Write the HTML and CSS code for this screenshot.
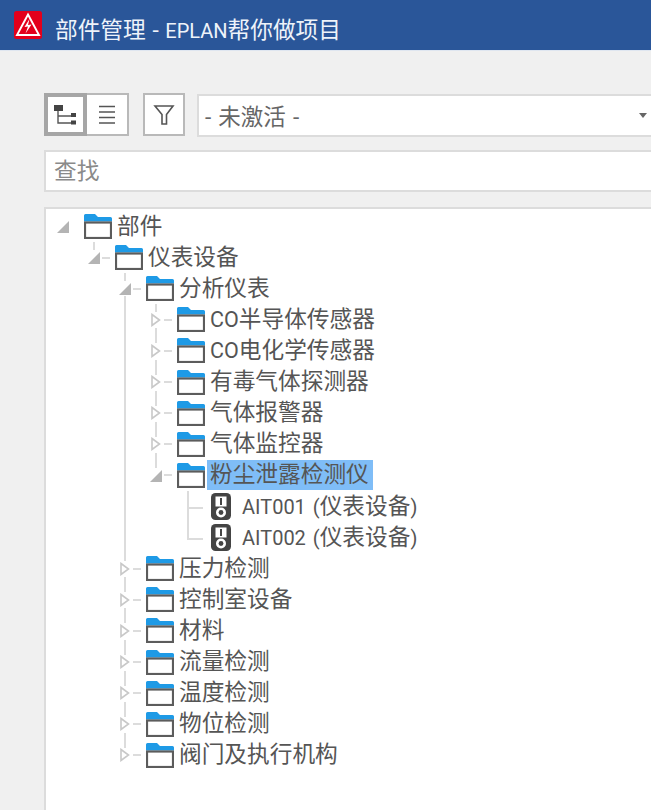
FILE: index.html
```html
<!DOCTYPE html>
<html lang="zh-CN">
<head>
<meta charset="utf-8">
<title>部件管理 - EPLAN帮你做项目</title>
<link rel="stylesheet" href="styles.css">
</head>
<body>
<svg class="defs" width="0" height="0" aria-hidden="true">
  <symbol id="folder" viewBox="0 0 28 25">
    <path d="M0 7.5V1.5Q0 0 1.5 0H11L14 3H26.5Q28 3 28 4.5V7.5Z" fill="#1e9ae6"/>
    <rect x="1" y="8.5" width="26" height="15.5" fill="#fff" stroke="#5c5c5c" stroke-width="2.2"/>
  </symbol>
  <symbol id="tw-open" viewBox="0 0 12 12">
    <path d="M12 0V12H0Z" fill="#b4b4b4"/>
  </symbol>
  <symbol id="tw-closed" viewBox="0 0 10 14">
    <path d="M1 1.5L8.5 7L1 12.5Z" fill="#fff" stroke="#c8c8c8" stroke-width="1.6"/>
  </symbol>
  <symbol id="device" viewBox="0 0 20 27">
    <rect width="20" height="27" rx="4.5" fill="#444"/>
    <rect x="4.5" y="3.5" width="11" height="10" fill="#fff"/>
    <rect x="9" y="5" width="2" height="7" fill="#444"/>
    <circle cx="10" cy="19.5" r="5" fill="#fff"/>
    <circle cx="10" cy="19.5" r="2.4" fill="#444"/>
  </symbol>
</svg>

<header class="titlebar">
  <svg class="logo" viewBox="0 0 28 28" aria-hidden="true">
    <rect width="28" height="28" rx="2.5" fill="#e3001b"/>
    <path d="M14 3.5L25 24H3Z" fill="none" stroke="#fff" stroke-width="1.9" stroke-linejoin="miter"/>
    <path d="M15.5 8L10.5 16L14 15.5L11.5 22.5L17.5 13.5L14 14Z" fill="#fff"/>
  </svg>
  <h1 class="title">部件管理 - <span class="lat">EPLAN</span>帮你做项目</h1>
</header>

<main class="main">
  <div class="toolbar">
    <div class="toggle">
      <button class="tool tool-active" type="button" aria-label="树视图">
        <svg class="tool-icon" viewBox="0 0 24 20" aria-hidden="true">
          <rect x="0" y="0" width="9" height="6" fill="#444"/>
          <path d="M4 6V18H17M4 11H17" fill="none" stroke="#555" stroke-width="1.4"/>
          <rect x="17" y="8" width="5" height="4" fill="#444"/>
          <rect x="17" y="15.5" width="5" height="4" fill="#444"/>
        </svg>
      </button>
      <button class="tool tool-second" type="button" aria-label="列表视图">
        <svg class="tool-icon" viewBox="0 0 24 20" aria-hidden="true">
          <path d="M4 1.5H20M4 7H20M4 12.5H20M4 18H20" stroke="#555" stroke-width="1.7" fill="none"/>
        </svg>
      </button>
    </div>
    <button class="tool tool-filter" type="button" aria-label="筛选">
      <svg class="tool-icon" viewBox="0 0 24 20" aria-hidden="true">
        <path d="M3 1H21L14.5 9.5V19H10V9.5Z" fill="none" stroke="#555" stroke-width="1.6"/>
      </svg>
    </button>
    <div class="combo">
      <span class="combo-text">- 未激活 -</span>
      <span class="combo-arrow"></span>
    </div>
  </div>

  <div class="search">查找</div>

  <div class="tree-panel">
    <ul class="tree">
      <li>
        <div class="row">
          <span class="twist"><svg class="tw tw-o"><use href="#tw-open"/></svg></span>
          <svg class="folder"><use href="#folder"/></svg><span class="label">部件</span>
        </div>
        <ul class="kids">
          <li>
            <div class="row up">
              <span class="twist dash"><svg class="tw tw-o"><use href="#tw-open"/></svg></span>
              <svg class="folder"><use href="#folder"/></svg><span class="label">仪表设备</span>
            </div>
            <ul class="kids">
              <li>
                <div class="row up">
                  <span class="twist dash"><svg class="tw tw-o"><use href="#tw-open"/></svg></span>
                  <svg class="folder"><use href="#folder"/></svg><span class="label">分析仪表</span>
                </div>
                <ul class="kids kids-line">
                  <li><div class="row up down"><span class="twist dash"><svg class="tw tw-c"><use href="#tw-closed"/></svg></span><svg class="folder"><use href="#folder"/></svg><span class="label"><span class="lat-co">CO</span>半导体传感器</span></div></li>
                  <li><div class="row up down"><span class="twist dash"><svg class="tw tw-c"><use href="#tw-closed"/></svg></span><svg class="folder"><use href="#folder"/></svg><span class="label"><span class="lat-co">CO</span>电化学传感器</span></div></li>
                  <li><div class="row up down"><span class="twist dash"><svg class="tw tw-c"><use href="#tw-closed"/></svg></span><svg class="folder"><use href="#folder"/></svg><span class="label">有毒气体探测器</span></div></li>
                  <li><div class="row up down"><span class="twist dash"><svg class="tw tw-c"><use href="#tw-closed"/></svg></span><svg class="folder"><use href="#folder"/></svg><span class="label">气体报警器</span></div></li>
                  <li><div class="row up down"><span class="twist dash"><svg class="tw tw-c"><use href="#tw-closed"/></svg></span><svg class="folder"><use href="#folder"/></svg><span class="label">气体监控器</span></div></li>
                  <li>
                    <div class="row up">
                      <span class="twist dash"><svg class="tw tw-o"><use href="#tw-open"/></svg></span>
                      <svg class="folder"><use href="#folder"/></svg><span class="label label-selected">粉尘泄露检测仪</span>
                    </div>
                    <ul class="kids">
                      <li><div class="row"><span class="twist elbow"></span><svg class="device"><use href="#device"/></svg><span class="label label-leaf"><span class="lat">AIT001 (</span>仪表设备<span class="lat">)</span></span></div></li>
                      <li><div class="row"><span class="twist elbow elbow-last"></span><svg class="device"><use href="#device"/></svg><span class="label label-leaf"><span class="lat">AIT002 (</span>仪表设备<span class="lat">)</span></span></div></li>
                    </ul>
                  </li>
                </ul>
              </li>
              <li><div class="row up down"><span class="twist dash"><svg class="tw tw-c"><use href="#tw-closed"/></svg></span><svg class="folder"><use href="#folder"/></svg><span class="label">压力检测</span></div></li>
              <li><div class="row up down"><span class="twist dash"><svg class="tw tw-c"><use href="#tw-closed"/></svg></span><svg class="folder"><use href="#folder"/></svg><span class="label">控制室设备</span></div></li>
              <li><div class="row up down"><span class="twist dash"><svg class="tw tw-c"><use href="#tw-closed"/></svg></span><svg class="folder"><use href="#folder"/></svg><span class="label">材料</span></div></li>
              <li><div class="row up down"><span class="twist dash"><svg class="tw tw-c"><use href="#tw-closed"/></svg></span><svg class="folder"><use href="#folder"/></svg><span class="label">流量检测</span></div></li>
              <li><div class="row up down"><span class="twist dash"><svg class="tw tw-c"><use href="#tw-closed"/></svg></span><svg class="folder"><use href="#folder"/></svg><span class="label">温度检测</span></div></li>
              <li><div class="row up down"><span class="twist dash"><svg class="tw tw-c"><use href="#tw-closed"/></svg></span><svg class="folder"><use href="#folder"/></svg><span class="label">物位检测</span></div></li>
              <li><div class="row up"><span class="twist dash"><svg class="tw tw-c"><use href="#tw-closed"/></svg></span><svg class="folder"><use href="#folder"/></svg><span class="label">阀门及执行机构</span></div></li>
            </ul>
          </li>
        </ul>
      </li>
    </ul>
  </div>
</main>
</body>
</html>
```

FILE: styles.css
```css
* { box-sizing: border-box; }

html, body {
  margin: 0;
  height: 100%;
  overflow: hidden;
}

body {
  display: flex;
  flex-direction: column;
  background: #f0f0f0;
  font-family: Roboto, "Noto Sans CJK SC", sans-serif;
  color: #555;
}

.defs { position: absolute; }

.lat { font-size: 20px; word-spacing: 2px; }
.lat-co { font-size: 21.5px; }

.titlebar {
  flex: none;
  height: 51px;
  display: flex;
  align-items: center;
  padding-left: 14px;
  gap: 14px;
  background: #2a5699;
  border-bottom: 1px solid #dfe6f0;
}

.logo { width: 28px; height: 28px; flex: none; }

.title {
  margin: 0 0 0 -1px;
  padding-top: 6px;
  font-size: 22.7px;
  font-weight: 400;
  word-spacing: 1px;
  color: #eef3fa;
  white-space: nowrap;
}

.main {
  flex: 1;
  min-height: 0;
  display: flex;
  flex-direction: column;
  padding: 42px 0 0 44px;
  margin-right: -12px;
}

.toolbar {
  flex: none;
  height: 44px;
  display: flex;
  align-items: flex-start;
}

.toggle { display: flex; }

.tool {
  width: 42px;
  height: 43px;
  padding: 0;
  display: flex;
  align-items: center;
  justify-content: center;
  background: #fff;
  border: 2px solid #b9b9b9;
}

.tool-active { width: 43px; border: 4px solid #a6a6a6; }
.tool-second { border-left: 0; }
.tool-filter { margin-left: 14px; }

.tool-icon { width: 24px; height: 20px; display: block; }

.combo {
  flex: 1;
  height: 43px;
  margin: 1px 0 0 12px;
  display: flex;
  align-items: center;
  justify-content: space-between;
  padding: 0 14px 2px 6px;
  background: #fff;
  border: 2px solid #dcdcdc;
}

.combo-text { font-size: 22.5px; word-spacing: 1.5px; color: #666; }

.combo-arrow {
  width: 0;
  height: 0;
  margin-top: 2px;
  border-left: 4px solid transparent;
  border-right: 4px solid transparent;
  border-top: 5px solid #666;
}

.search {
  flex: none;
  height: 42px;
  margin-top: 13px;
  padding: 0 0 3px 8px;
  display: flex;
  align-items: center;
  font-size: 22.7px;
  color: #8a8a8a;
  background: #fff;
  border: 2px solid #dcdcdc;
}

.tree-panel {
  flex: 1;
  margin: 15px 0 -4px;
  padding-top: 2px;
  background: #fff;
  border: 2px solid #dcdcdc;
}

.tree, .kids {
  list-style: none;
  margin: 0;
  padding: 0;
}

.tree { padding-left: 6px; }
.kids { margin-left: 31px; position: relative; }

.kids-line::before {
  content: "";
  position: absolute;
  left: -21px;
  top: -8px;
  bottom: 0;
  width: 2px;
  background: #dcdcdc;
}

.row {
  position: relative;
  height: 31.12px;
  display: flex;
  align-items: center;
  white-space: nowrap;
}

.row.up::before,
.row.down::after {
  content: "";
  position: absolute;
  left: 10px;
  width: 2px;
  background: #dcdcdc;
}

.row.up::before { top: 0; height: 8px; }
.row.down::after { bottom: 0; height: 7px; }

.twist {
  position: relative;
  flex: none;
  width: 22px;
  height: 100%;
  display: flex;
  align-items: center;
  justify-content: center;
}

.dash::after {
  content: "";
  position: absolute;
  left: 19px;
  top: 50%;
  width: 8px;
  height: 2px;
  margin-top: -1px;
  background: #dcdcdc;
}

.tw { display: block; }
.tw-o { width: 12px; height: 12px; margin-top: 1px; }
.tw-c { width: 10px; height: 14px; }

.elbow::before {
  content: "";
  position: absolute;
  left: 11px;
  top: 0;
  bottom: 0;
  width: 2px;
  background: #dcdcdc;
}

.elbow-last::before { bottom: 50%; }

.elbow::after {
  content: "";
  position: absolute;
  left: 11px;
  top: 50%;
  width: 16px;
  height: 2px;
  background: #dcdcdc;
}

.folder {
  flex: none;
  width: 28px;
  height: 25px;
  margin-left: 10px;
}

.device {
  flex: none;
  width: 20px;
  height: 27px;
  margin-left: 13px;
}

.label {
  margin-left: 5px;
  font-size: 22.7px;
  line-height: 30px;
  color: #555;
}

.label-leaf { margin-left: 11px; }

.label-selected {
  margin-left: 2px;
  padding: 0 4px 0 3px;
  background: #7fbdf7;
}
```
